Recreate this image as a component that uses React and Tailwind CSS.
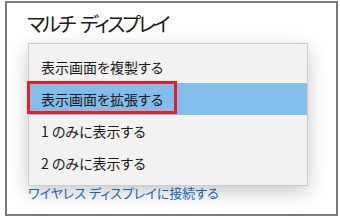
import React from "react";

const items = [
  "表示画面を複製する",
  "表示画面を拡張する",
  "1 のみに表示する",
  "2 のみに表示する",
];

const font = "font-['Noto_Sans_CJK_JP','Noto_Sans',sans-serif] [font-feature-settings:'palt']";

const App = () => {
  return (
    <div className={`w-[340px] h-[220px] bg-white pt-[1px] pl-[5px] ${font}`}>
      {/* Frame */}
      <div className="relative w-[333px] h-[215px] border-2 border-[#7a7a7a] bg-white">
        {/* Title */}
        <h1 className="flex pl-[20px] pt-[7px] text-[20px] leading-[28px] tracking-[-2.7px] text-[#1a1a1a]">
          <span className="mr-[6px]">マルチ</span>
          <span>ディスプレイ</span>
        </h1>

        {/* Closed combobox area */}
        <div className="h-[145px]" />

        {/* Link */}
        <a className="block pl-[21px] text-[13px] leading-[20px] text-[#1b6ec2]">
          ワイヤレス ディスプレイに接続する
        </a>

        {/* Dropdown menu */}
        <div className="absolute left-[21px] top-[40px] w-[280px] h-[143px] bg-[#f2f2f2] border border-[#cccccc] shadow-[0_6px_18px_rgba(0,0,0,0.22)] pt-[7px]">
          {items.map((label, i) => (
            <div
              key={i}
              className={`relative h-[32px] flex items-center pl-[12px] text-[14px] text-[#1a1a1a] ${
                i === 1 ? "bg-[#82bdeb]" : ""
              }`}
            >
              {label}
              {i === 1 && (
                <div className="absolute left-[-2px] top-[-2px] w-[150px] h-[33px] border-[3px] border-[#ec1c24]" />
              )}
            </div>
          ))}
        </div>
      </div>
    </div>
  );
};

export default App;
